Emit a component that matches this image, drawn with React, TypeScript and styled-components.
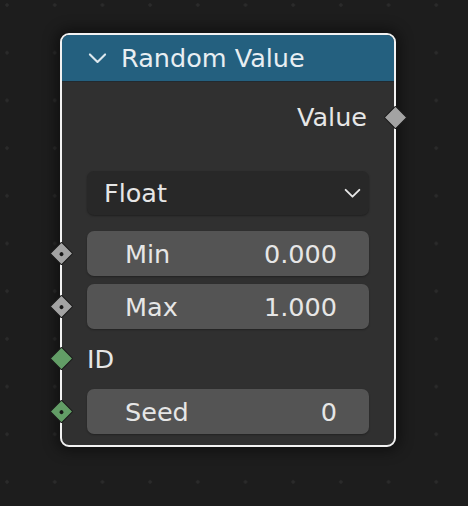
import React from "react";
import styled, { createGlobalStyle } from "styled-components";

const GlobalStyle = createGlobalStyle`
  html, body {
    margin: 0;
    padding: 0;
    background: #1d1d1d;
  }
  * {
    box-sizing: border-box;
  }
`;

type SocketKind = "float" | "id";

interface IInput {
    label: string;
    value?: string;
    kind: SocketKind;
}

const inputs: IInput[] = [
    { label: "Min", value: "0.000", kind: "float" },
    { label: "Max", value: "1.000", kind: "float" },
    { label: "ID", kind: "id" },
    { label: "Seed", value: "0", kind: "id" },
];

const Chevron = ({ size = 18, color = "#e6e6e6" }: { size?: number; color?: string }) => (
    <svg width={size} height={size} viewBox="0 0 18 18">
        <path d="M2.5 5.5 L9 12 L15.5 5.5" fill="none" stroke={color} strokeWidth="1.8" strokeLinecap="round" strokeLinejoin="round" />
    </svg>
);

const App: React.FC = () => {
    return (
        <Canvas>
            <GlobalStyle />
            <Node>
                <Header>
                    <Chevron size={21} color="#dde8ee" />
                    <Title>Random Value</Title>
                </Header>
                <Body>
                    <OutputRow>
                        <SocketLabel>Value</SocketLabel>
                        <Socket side="right" kind="float" />
                    </OutputRow>
                    <Dropdown>
                        <span>Float</span>
                        <Chevron size={19} />
                    </Dropdown>
                    <Inputs>
                        {inputs.map((el) =>
                            el.value !== undefined ? (
                                <InputRow key={el.label}>
                                    <Socket side="left" kind={el.kind} dot />
                                    <Field>
                                        <span>{el.label}</span>
                                        <span>{el.value}</span>
                                    </Field>
                                </InputRow>
                            ) : (
                                <InputRow key={el.label} plain>
                                    <Socket side="left" kind={el.kind} />
                                    <SocketLabel>{el.label}</SocketLabel>
                                </InputRow>
                            )
                        )}
                    </Inputs>
                </Body>
            </Node>
        </Canvas>
    );
};
export default App;

const Canvas = styled.div`
  position: relative;
  width: 468px;
  height: 506px;
  overflow: hidden;
  background-color: #1d1d1d;
  background-image: radial-gradient(circle, #2b2b2b 1.4px, transparent 2px);
  background-size: 47.7px 47.7px;
  background-position: -16.8px -18.8px;
  font-family: "DejaVu Sans", "Liberation Sans", sans-serif;
  color: #e6e6e6;
`;

const Node = styled.div`
  position: absolute;
  left: 60px;
  top: 33px;
  width: 336px;
  height: 414px;
  border: 2px solid #f2f2f2;
  border-radius: 9px;
  background: #303030;
  box-shadow: 0 0 14px 4px rgba(0, 0, 0, 0.45);
  display: flex;
  flex-direction: column;
`;

const Header = styled.div`
  height: 47px;
  background: #24607f;
  border-radius: 7px 7px 0 0;
  display: flex;
  align-items: center;
  gap: 13px;
  padding-left: 25px;
  border-bottom: 1px solid #222a30;
`;

const Title = styled.span`
  font-size: 25.5px;
  color: #e8eef2;
`;

const Body = styled.div`
  display: flex;
  flex-direction: column;
  padding: 0 25px;
`;

const OutputRow = styled.div`
  position: relative;
  height: 44px;
  margin-top: 13px;
  display: flex;
  align-items: center;
  justify-content: flex-end;
  padding-right: 2px;
`;

const SocketLabel = styled.span`
  font-size: 25.5px;
`;

const Socket = styled.div<{ side: "left" | "right"; kind: SocketKind; dot?: boolean }>`
  position: absolute;
  top: 50%;
  ${(p) => (p.side === "left" ? "left: -34.5px;" : "right: -34.5px;")}
  width: 17px;
  height: 17px;
  margin-top: -8.5px;
  transform: rotate(45deg);
  background: ${(p) => (p.kind === "id" ? "#629d66" : "#a3a3a3")};
  border: 1.5px solid #1a1a1a;
  border-radius: 1.5px;
  &::after {
    content: "";
    display: ${(p) => (p.dot ? "block" : "none")};
    position: absolute;
    left: 50%;
    top: 50%;
    width: 4px;
    height: 4px;
    margin: -2px 0 0 -2px;
    border-radius: 50%;
    background: #161616;
  }
`;

const Dropdown = styled.div`
  margin-top: 32px;
  height: 44px;
  border-radius: 7px;
  background: #282828;
  box-shadow: 0 1px 2px rgba(0, 0, 0, 0.35);
  display: flex;
  align-items: center;
  justify-content: space-between;
  padding: 0 7px 0 17px;
  font-size: 25.5px;
`;

const Inputs = styled.div`
  margin-top: 16px;
  display: flex;
  flex-direction: column;
  gap: 8px;
`;

const InputRow = styled.div<{ plain?: boolean }>`
  position: relative;
  height: ${(p) => (p.plain ? "43px" : "45px")};
  display: flex;
  align-items: center;
  margin-bottom: ${(p) => (p.plain ? "1px" : "0")};
`;

const Field = styled.div`
  flex: 1;
  height: 100%;
  border-radius: 7px;
  background: #545454;
  box-shadow: 0 1px 2px rgba(0, 0, 0, 0.3);
  display: flex;
  align-items: center;
  justify-content: space-between;
  padding: 0 32px 0 38px;
  font-size: 25.5px;
`;
